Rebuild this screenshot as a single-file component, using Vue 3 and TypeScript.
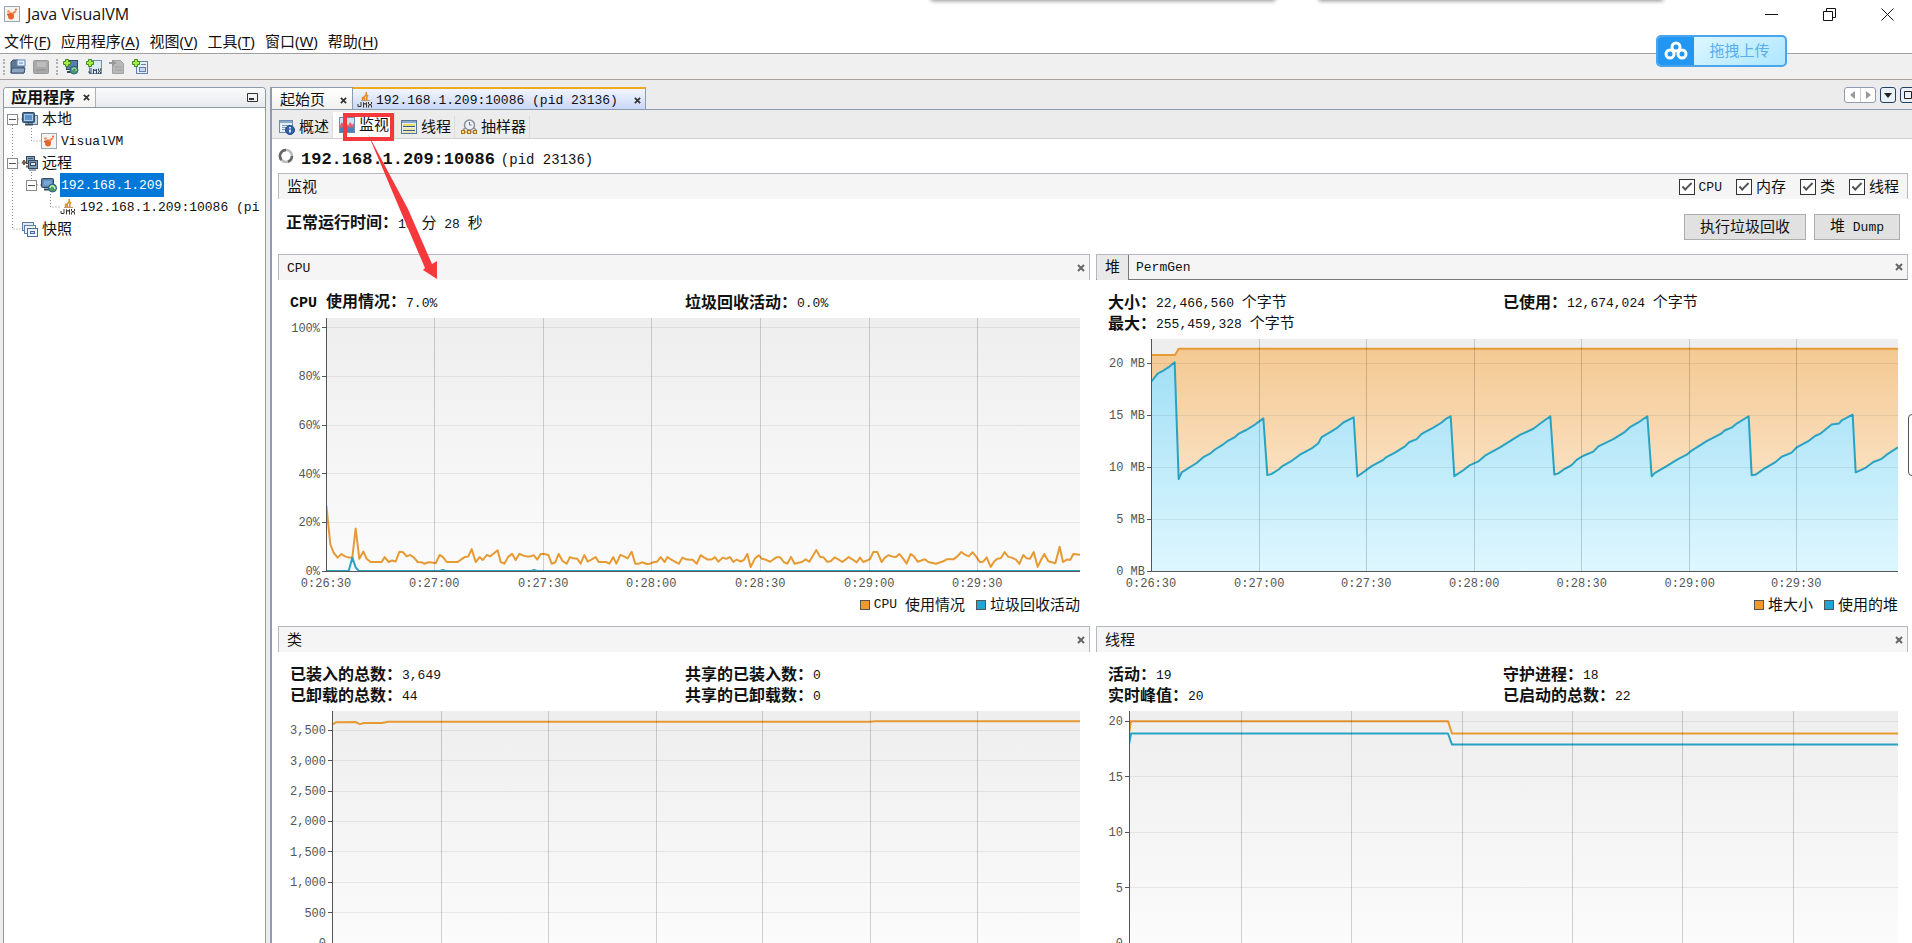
<script setup lang="ts">
import { h } from 'vue'

type Point = [number, number]
interface Tick { at: number; label: string }
interface Series { points: Point[]; kind: 'orange' | 'blue'; filled?: boolean }
interface Chart {
  id: string
  title: string
  tabs?: string[]
  info: [string, string][]
  width: number
  max: number
  xTicks: Tick[]
  yTicks: Tick[]
  series: Series[]
  legend: { kind: 'orange' | 'blue'; label: string }[]
}

/* Splits text into Latin and CJK runs so that each gets its own size. */
const Mix = (props: { text: string }) =>
  h('span', { class: 'mix' },
    (props.text.match(/[\x00-\x7f]+|[^\x00-\x7f]+/g) ?? []).map((run) =>
      h('span', { class: run.charCodeAt(0) < 128 ? 'latin' : 'han' }, run)))
Mix.props = ['text']

const track = (shift: number, source: string): Point[] =>
  source.trim().split(/\s+/).map((pair) => {
    const [x, v] = pair.split(',').map(Number)
    return [x + shift, v]
  })

const times = ['0:26:30', '0:27:00', '0:27:30', '0:28:00', '0:28:30', '0:29:00', '0:29:30']
const xTicks = (at: number[], labelled = true): Tick[] =>
  at.map((x, i) => ({ at: x, label: labelled ? times[i] : '' }))

const cpuLoad = [
  ...track(-168, `169,27 181,11 191,7.5 203,5.5 214,7 225,6 236,5.5 247,5.5 257,17.5 268,5 280,8 290,5 302,3.7 335,3.7
    344,5.7 356,3.7 366,4.3 377,3.9 388,7.9 399,7.7 410,6 421,6.6 432,5.5 443,3.7 454,3.6 465,3 475,3.6 486,3.5 497,3.2
    509,6.6 519,5.7 530,3.7 563,3.7 575,4.9 585,5.8 595,6 605,9 617,3.7 629,5.7 638,4.5 651,6.6 660,6 672,7.3 683,8.5
    692,3.7 703,3 714,5.7 726,7.1 737,4.5 748,7 759,6.4 770,6 781,6 791,6.5 802,4.7 812,7 823,7 835,6.6 845,3 856,3.6
    866,7 878,4 890,3 900,5.7 910,5.2 922,5 932,3 943,6.6 953,3.9 964,4.7 977,5.7 986,3.7 1008,3.7 1018,3 1030,5.7
    1039,3 1051,6.6 1062,6 1073,5.2 1085,7.9 1096,3 1107,3 1117,3.6 1130,2.9 1140,3 1150,3.6 1161,3.8 1172,5.7
    1184,3.7 1192,5.7 1204,4.7 1216,3.7 1227,3`),
  ...track(1062, `7,5.5 18,4.8 30,4.6 38,4.6 50,3 62,6.5 73,5.5 83,4.7 95,4.7 105,5.7 115,3.8 128,5.5 138,5 150,5.7 160,3.7
    170,4.7 182,3.9 192,4.6 202,7 212,1.6 224,5 236,6.5 246,5 258,4.6 270,3.8 290,5.7 300,5.7 312,3.6 322,3 333,5.8
    344,3 356,3.4 367,3.8 377,4.8 388,3.8 409,8.6 420,5.8 430,5.7 442,3.8 452,4 464,5.6 475,4.8 487,3.7 506,5.7
    518,4.7 530,3.5 540,5.5 550,3.7 570,4.9 580,7.8 592,7.8 605,3.7 614,5.4 625,6.5 636,6 648,5.8 658,7 670,5 680,3
    692,7 702,6 713,3.8 735,4.8 745,3.7 768,3 790,4 800,4.8 820,4.8 832,6 844,7.8 855,6.7 866,6 878,7.7 888,6 900,3.6
    910,3.9 920,5.6 932,1.7 943,4 952,5 963,5.3 974,7.8 985,5.8 997,5.4 1008,4.7 1018,2.9 1030,6.6 1040,5.2 1050,5
    1061,7.8 1073,1.7 1083,4.5 1093,7 1105,4 1126,3.2 1139,10 1149,3.7 1160,4.7 1171,4.6 1180,7 1200,6.7`),
]
const gcLoad = track(0, '0,0 68,0 79,5.5 89,1.5 98,0 342,0 350,0.4 360,0 615,0 624,0.4 634,0 2262,0')

const heapUsed = [
  ...track(-183, `183,18.2 203,19 220,19.3 237,19.65 254,20.1 266,8.85 275,9.5 297,9.94 320,10.4 340,10.96 360,11.3 375,11.7
    400,12.2 412,12.5 435,12.9 445,13.2 470,13.6 495,14.1 520,14.7 532,9.23 545,9.35 567,9.8 577,10.1 600,10.5 630,11.2
    665,11.8 685,12.3 695,12.9 727,13.5 740,13.75 760,14.3 791,14.8 802,9.1 845,10.1 880,10.7 888,10.95 915,11.4 945,12
    957,12.4 980,12.7 995,13.2 1030,13.8 1055,14.3 1070,14.7 1082,14.9 1093,9.13 1120,9.7 1140,10.2 1165,10.55 1185,11.1`),
  ...track(1047, `0,11.9 30,12.5 60,13.1 100,13.7 125,14.3 151,14.9 163,9.3 175,9.4 190,9.75 215,10.2 230,10.7 250,11.1
    280,11.5 295,12 340,12.7 375,13.4 390,13.85 415,14.3 442,14.9 455,9.13 465,9.45 500,10.1 530,10.7 560,11.2 575,11.6
    620,12.5 662,13.2 675,13.55 695,13.8 710,14.2 746,14.9 755,9.23 768,9.3 790,9.8 825,10.45 845,11 875,11.4 890,11.9
    925,12.5 945,13 960,13.2 995,14.1 1017,14.2 1025,14.5 1058,15.05 1067,9.5 1095,9.9 1120,10.5 1145,10.8 1160,11.2
    1194,11.9`),
]
const heapSize = track(0, '0,20.8 72,20.8 83,21.4 2241,21.4')

const charts: Chart[] = [
  {
    id: 'cpu', title: 'CPU',
    info: [['CPU 使用情况：', '7.0%'], ['垃圾回收活动：', '0.0%']],
    width: 2262, max: 104,
    xTicks: xTicks([0, 325, 652, 976, 1303, 1630, 1954]),
    yTicks: [0, 20, 40, 60, 80, 100].map((v) => ({ at: v, label: `${v}%` })),
    series: [{ points: cpuLoad, kind: 'orange' }, { points: gcLoad, kind: 'blue' }],
    legend: [{ kind: 'orange', label: 'CPU 使用情况' }, { kind: 'blue', label: '垃圾回收活动' }],
  },
  {
    id: 'heap', title: '', tabs: ['堆', 'PermGen'],
    info: [['大小：', '22,466,560 个字节'], ['已使用：', '12,674,024 个字节'], ['最大：', '255,459,328 个字节']],
    width: 2241, max: 22.34,
    xTicks: xTicks([0, 325, 646, 970, 1292, 1616, 1936]),
    yTicks: [0, 5, 10, 15, 20].map((v) => ({ at: v, label: `${v} MB` })),
    series: [{ points: heapSize, kind: 'orange', filled: true }, { points: heapUsed, kind: 'blue', filled: true }],
    legend: [{ kind: 'orange', label: '堆大小' }, { kind: 'blue', label: '使用的堆' }],
  },
  {
    id: 'classes', title: '类',
    info: [['已装入的总数：', '3,649'], ['共享的已装入数：', '0'], ['已卸载的总数：', '44'], ['共享的已卸载数：', '0']],
    width: 2244, max: 3816,
    xTicks: xTicks([0, 327, 649, 972, 1292, 1614, 1936], false),
    yTicks: [0, 500, 1000, 1500, 2000, 2500, 3000, 3500].map((v) => ({ at: v, label: v.toLocaleString('en-US') })),
    series: [{ points: track(0, '0,3590 12,3630 70,3635 84,3600 96,3618 150,3618 168,3640 1615,3640 1630,3649 2244,3649'), kind: 'orange' }],
    legend: [],
  },
  {
    id: 'threads', title: '线程',
    info: [['活动：', '19'], ['守护进程：', '18'], ['实时峰值：', '20'], ['已启动的总数：', '22']],
    width: 2307, max: 20.93,
    xTicks: xTicks([0, 336, 666, 999, 1329, 1661, 1992], false),
    yTicks: [0, 5, 10, 15, 20].map((v) => ({ at: v, label: `${v}` })),
    series: [
      { points: track(0, '0,18.9 6,20 957,20 969,18.9 2307,18.9'), kind: 'orange' },
      { points: track(0, '0,17.9 6,18.9 957,18.9 969,17.9 2307,17.9'), kind: 'blue' },
    ],
    legend: [],
  },
]

const line = (c: Chart, s: Series) => s.points.map(([x, v]) => `${x},${(c.max - v) / c.max * 1000}`).join(' ')
const area = (c: Chart, s: Series) => `0,1000 ${line(c, s)} ${c.width},1000`
const px = (c: Chart, t: Tick) => `${t.at / c.width * 100}%`
const py = (c: Chart, t: Tick) => `${(c.max - t.at) / c.max * 100}%`

const menus = [['文件', 'F'], ['应用程序', 'A'], ['视图', 'V'], ['工具', 'T'], ['窗口', 'W'], ['帮助', 'H']]
const tree = [
  { level: 1, icon: 'local', text: '本地', open: true },
  { level: 2, icon: 'vvm', text: 'VisualVM' },
  { level: 1, icon: 'remote', text: '远程', open: true },
  { level: 2, icon: 'host', text: '192.168.1.209', open: true, selected: true },
  { level: 3, icon: 'jmx', text: '192.168.1.209:10086 (pi' },
  { level: 1, icon: 'snap', text: '快照' },
]
const views = [
  { icon: 'overview', text: '概述' },
  { icon: 'monitor', text: '监视', on: true },
  { icon: 'threads', text: '线程' },
  { icon: 'sampler', text: '抽样器' },
]
const checks = ['CPU', '内存', '类', '线程']
</script>

<template>
  <svg class="defs" aria-hidden="true">
    <defs>
      <linearGradient id="plot-bg" x1="0" y1="0" x2="0" y2="1"><stop offset="0" stop-color="#eeeeee" /><stop offset="1" stop-color="#fbfbfb" /></linearGradient>
      <linearGradient id="fill-orange" gradientUnits="userSpaceOnUse" x1="0" y1="0" x2="0" y2="1000"><stop offset="0" stop-color="#f3c78f" /><stop offset="1" stop-color="#fff2e2" /></linearGradient>
      <linearGradient id="fill-blue" gradientUnits="userSpaceOnUse" x1="0" y1="0" x2="0" y2="1000"><stop offset="0" stop-color="#9bddf4" /><stop offset="1" stop-color="#def7ff" /></linearGradient>
    </defs>
    <symbol id="vvm" viewBox="0 0 16 16"><rect x=".5" y=".5" width="15" height="15" fill="#f7f3ee" stroke="#9aa7b5" /><ellipse cx="7" cy="10" rx="3" ry="3.500" fill="#e8642c" /><path d="M8 8l4-3" stroke="#ef8a50" stroke-width="2" /><circle cx="4.500" cy="5.500" r="1.300" fill="#ef8a50" /><circle cx="12" cy="3.500" r="1" fill="#e8642c" /><circle cx="4" cy="8.500" r="1" fill="#c9502a" /></symbol>
    <symbol id="local" viewBox="0 0 16 16"><rect x="6.500" y="4.500" width="9" height="9" fill="#c9d3dd" stroke="#61758a" /><rect x=".5" y="1.500" width="12" height="10" rx="1" fill="#3f6f9e" stroke="#334b63" /><rect x="2.500" y="3.500" width="8" height="6" fill="#5e94c8" stroke="#a9c8e4" /><path d="M3 13.500h8" stroke="#334b63" stroke-width="2" /></symbol>
    <symbol id="remote" viewBox="0 0 16 16"><rect x="4.500" y="1.500" width="8" height="7" fill="#8aa6c0" stroke="#33485e" /><rect x="6.500" y="5.500" width="9" height="8" fill="#7f9ab3" stroke="#33485e" /><rect x="8.500" y="7.500" width="5" height="3" fill="#dce8f2" stroke="#33485e" /><path d="M6 3.500h5M7 15h7" stroke="#3c5268" /><path d="M0 7.500h4M2 5v5M4 11.500h2" stroke="#7a5a48" stroke-width="2" /></symbol>
    <symbol id="host" viewBox="0 0 16 16"><rect x=".5" y="1.500" width="12" height="9" rx="1" fill="#5482b1" stroke="#34495f" /><rect x="2.500" y="3.500" width="8" height="5" fill="#79a7d3" /><path d="M3 12.500h7" stroke="#34495f" stroke-width="2" /><circle cx="11.500" cy="11" r="4" fill="#4b9a64" stroke="#2c5f87" /><path d="M9 11q1-3 3-2t2 3" stroke="#c4edb4" fill="none" stroke-width="1.500" /></symbol>
    <symbol id="jmx" viewBox="0 0 16 16"><path d="M9 0q1 3-1 4t0 4M11 3q-2 2-1 5M6 5q-1 1 0 3" stroke="#e08a2a" stroke-width="1.600" fill="none" /><path d="M4 8.500h9" stroke="#c49a60" /><path d="M1 12v2.500h3V10M6.500 15.500v-5l1.500 2 1.500-2v5M11.500 10v2l3 1.500v2M14.500 10v2l-3 1.500v2" stroke="#3b342e" fill="none" /></symbol>
    <symbol id="snap" viewBox="0 0 16 16"><rect x=".5" y="1.500" width="11" height="8" fill="#dfe8f3" stroke="#5d7da5" /><rect x="2.500" y="4.500" width="11" height="8" fill="#eef3f9" stroke="#5d7da5" /><rect x="5.500" y="7.500" width="10" height="8" fill="#eef3f9" stroke="#4a6c98" /><rect x="8.500" y="10.500" width="4" height="2" fill="#cfdcec" stroke="#4a6c98" /></symbol>
    <symbol id="open" viewBox="0 0 16 16"><path d="M1 14V3l2-2h5l1 2h5v11z" fill="#5f7795" stroke="#3c526f" /><rect x="7" y="1" width="8" height="6" fill="#e3edf8" stroke="#5f82b0" /><path d="M1 14l1-5h13l-1 5z" fill="#8aa4c2" stroke="#3c526f" /><path d="M9 4h4" stroke="#5f82b0" /></symbol>
    <symbol id="save" viewBox="0 0 16 16"><rect x=".5" y="1.500" width="15" height="13" rx="1" fill="#a9a9a9" stroke="#999" /><rect x="4" y="3" width="9" height="5" fill="#bdbdbd" /><path d="M3 11h10" stroke="#8f8f8f" /></symbol>
    <symbol id="plus" viewBox="0 0 16 16"><path d="M2.500.5h3v2h2v3h-2v2h-3v-2h-2v-3h2z" fill="#a6ea4a" stroke="#3d8a1d" /></symbol>
    <symbol id="add-host" viewBox="0 0 16 16"><rect x="3.500" y="1.500" width="11" height="9" fill="#5482b1" stroke="#34495f" /><path d="M4 13h7" stroke="#34495f" stroke-width="2" /><circle cx="11" cy="11" r="4" fill="#4b9a64" stroke="#2c5f87" /><path d="M9 11q1-3 3-2t1 3" stroke="#b9e6b2" fill="none" /><use href="#plus" width="16" height="16" /></symbol>
    <symbol id="add-jmx" viewBox="0 0 16 16"><rect x="3.500" y="1.500" width="12" height="13" fill="#dde8f3" stroke="#6b8fb5" /><path d="M3 12v2h2V9M7.500 15v-5l1.500 2 1.500-2v5M12.500 9.500v2l2 1.500v2M14.500 9.500v2l-2 1.500v2" stroke="#3a4a5a" fill="none" /><use href="#plus" width="16" height="16" /></symbol>
    <symbol id="add-off" viewBox="0 0 16 16"><path d="M3.500 1.500h8l3 3v10h-11z" fill="#b8b8b8" stroke="#a2a2a2" /><path d="M6 8h7M6 11h7" stroke="#a0a0a0" /><path d="M0 4h7M4 1v6" stroke="#989898" stroke-width="2" /></symbol>
    <symbol id="add-snap" viewBox="0 0 16 16"><rect x="4.500" y="2.500" width="11" height="12" fill="#e7eef7" stroke="#5f82b0" /><rect x="7.500" y="8.500" width="6" height="4" fill="#c8d8ec" stroke="#5f82b0" /><path d="M9 5.500h5" stroke="#5f82b0" /><use href="#plus" width="16" height="16" /></symbol>
    <symbol id="overview" viewBox="0 0 16 16"><rect x=".5" y="1.500" width="13" height="12" fill="#e6eef6" stroke="#6d8cad" /><rect x="1" y="2" width="12" height="2" fill="#88a9cc" /><path d="M3 6.500h8M3 8.500h4M3 10.500h3" stroke="#7f9bb8" /><circle cx="11" cy="11" r="4.500" fill="#2f62a8" stroke="#1e4781" /><path d="M11 8v1.500M11 10.500v3" stroke="#fff" stroke-width="1.600" /></symbol>
    <symbol id="monitor" viewBox="0 0 16 16"><rect x=".5" y=".5" width="15" height="15" fill="#cfe2f4" stroke="#6d8cad" /><path d="M1 12V8l2-3 2 4 2-5 2 5 2-4 2 3 2-2v6z" fill="#e2606a" /><path d="M1 15v-4l3-1 2 2 2-3 3 2 2-1 2 1v4z" fill="#4a80bd" /></symbol>
    <symbol id="threads" viewBox="0 0 16 16"><rect x=".5" y="1.500" width="15" height="13" fill="#e9eef4" stroke="#56779b" /><rect x="1" y="2" width="14" height="2" fill="#88a9cc" /><path d="M2 6h12" stroke="#e8dd6a" stroke-width="2" /><path d="M2 7.500h12M2 11.500h12" stroke="#3c5d86" /><path d="M2 10h12M2 13h12" stroke="#e8dd6a" /></symbol>
    <symbol id="sampler" viewBox="0 0 16 16"><circle cx="8.500" cy="6" r="5" fill="#edf1f5" stroke="#8c8f98" stroke-width="1.500" /><path d="M8.500 3v3h2" stroke="#66707c" fill="none" /><path d="M4 9l-2 2M13 9l2 2" stroke="#8c8f98" stroke-width="1.500" /><rect x=".5" y="11.500" width="3" height="3" fill="#f9e08a" stroke="#a8741c" /><rect x="6.500" y="11.500" width="3" height="3" fill="#f9e08a" stroke="#a8741c" /><rect x="12.500" y="11.500" width="3" height="3" fill="#f9e08a" stroke="#a8741c" /><path d="M4 13h2M10 13h2" stroke="#a8741c" /></symbol>
    <symbol id="x" viewBox="0 0 8 8"><path d="M1 1l6 6M7 1L1 7" stroke="currentColor" stroke-width="2" /></symbol>
  </svg>

  <div class="window">
    <header class="titlebar">
      <svg class="icon"><use href="#vvm" /></svg>
      <h1>Java VisualVM</h1>
      <div class="winbtns">
        <button type="button" aria-label="最小化"><svg viewBox="0 0 13 13"><path d="M0 6.500h13" /></svg></button>
        <button type="button" aria-label="还原"><svg viewBox="0 0 13 13"><path d="M.5 3.500h9v9h-9zM3.500 3.500v-3h9v9h-3" /></svg></button>
        <button type="button" aria-label="关闭"><svg viewBox="0 0 13 13"><path d="M.5.5l12 12M12.500.5l-12 12" /></svg></button>
      </div>
    </header>
    <nav class="menubar">
      <button v-for="m in menus" :key="m[1]" type="button">{{ m[0] }}(<u>{{ m[1] }}</u>)</button>
    </nav>
    <div class="toolbar">
      <span class="grip"></span>
      <button type="button" aria-label="打开"><svg class="icon"><use href="#open" /></svg></button>
      <button type="button" aria-label="保存" disabled><svg class="icon"><use href="#save" /></svg></button>
      <span class="grip"></span>
      <button type="button" aria-label="添加远程主机"><svg class="icon"><use href="#add-host" /></svg></button>
      <button type="button" aria-label="添加 JMX 连接"><svg class="icon"><use href="#add-jmx" /></svg></button>
      <button type="button" aria-label="添加核心转储" disabled><svg class="icon"><use href="#add-off" /></svg></button>
      <button type="button" aria-label="添加快照"><svg class="icon"><use href="#add-snap" /></svg></button>
    </div>

    <div class="workspace">
      <aside class="sidebar">
        <div class="side-head">
          <div class="side-tab"><b>应用程序</b><button type="button" aria-label="关闭应用程序"><svg class="cross"><use href="#x" /></svg></button></div>
          <button type="button" class="minimise" aria-label="最小化窗口组"><svg viewBox="0 0 11 9"><path d="M.5.5h10v8H.5z" fill="none" stroke="#333" /><path d="M2 6h5" stroke="#333" stroke-width="2" /></svg></button>
        </div>
        <div class="tree">
          <svg class="guides" aria-hidden="true"><path d="M8.500 11v110h10M8.500 55h10M14 11h6M27.500 20v13h10M27.500 64v14M33 77h6M46.500 86v13h10" /></svg>
          <div v-for="n in tree" :key="n.text" class="node" :class="'level-' + n.level">
            <button v-if="n.open" type="button" class="toggle" :aria-label="'折叠 ' + n.text"></button>
            <span v-else class="no-toggle"></span>
            <svg class="icon"><use :href="'#' + n.icon" /></svg>
            <span class="label" :class="{ selected: n.selected }"><Mix :text="n.text" /></span>
          </div>
        </div>
      </aside>

      <main class="editor">
        <div class="doc-tabs">
          <div class="doc-tab"><span>起始页</span><button type="button" aria-label="关闭起始页"><svg class="cross"><use href="#x" /></svg></button></div>
          <div class="doc-tab active"><svg class="icon"><use href="#jmx" /></svg><Mix text="192.168.1.209:10086 (pid 23136)" /><button type="button" aria-label="关闭标签"><svg class="cross"><use href="#x" /></svg></button></div>
          <div class="doc-nav">
            <span class="pair"><button type="button" aria-label="向左"><svg viewBox="0 0 5 8"><path d="M5 0v8L0 4z" fill="#999" /></svg></button><button type="button" aria-label="向右"><svg viewBox="0 0 5 8"><path d="M0 0v8l5-4z" fill="#999" /></svg></button></span>
            <button type="button" class="box" aria-label="文档列表"><svg viewBox="0 0 8 5"><path d="M0 0h8L4 5z" fill="#222" /></svg></button>
            <button type="button" class="box" aria-label="最大化"><svg viewBox="0 0 8 8"><path d="M.5.5h7v7h-7z" fill="none" stroke="#222" /></svg></button>
          </div>
        </div>
        <div class="view-tabs">
          <button v-for="v in views" :key="v.text" type="button" :class="{ on: v.on }"><svg class="icon"><use :href="'#' + v.icon" /></svg>{{ v.text }}</button>
        </div>

        <div class="page">
          <h2 class="heading">
            <svg class="spinner" viewBox="0 0 16 16"><circle cx="8" cy="8" r="6" fill="none" stroke="#bbb" stroke-width="2.500" /><path d="M8 2a6 6 0 0 0-4.500 10M10 13.700A6 6 0 0 0 14 8" fill="none" stroke="#666" stroke-width="2.500" /></svg>
            <b>192.168.1.209:10086</b><span>(pid 23136)</span>
          </h2>
          <div class="bar">
            <span>监视</span>
            <div class="checks">
              <label v-for="c in checks" :key="c"><input type="checkbox" checked /><Mix :text="c" /></label>
            </div>
          </div>
          <div class="uptime">
            <p><b>正常运行时间：</b><Mix text="18 分 28 秒" /></p>
            <div class="actions">
              <button type="button">执行垃圾回收</button>
              <button type="button"><Mix text="堆 Dump" /></button>
            </div>
          </div>

          <div class="panels">
            <section v-for="c in charts" :key="c.id" class="panel" :class="c.id">
              <div class="bar" :class="{ tabbed: c.tabs }">
                <template v-if="c.tabs"><button v-for="(t, i) in c.tabs" :key="t" type="button" class="heap-tab" :class="{ on: i === 0 }"><Mix :text="t" /></button></template>
                <Mix v-else :text="c.title" />
                <button type="button" class="close" aria-label="关闭面板"><svg><use href="#x" /></svg></button>
              </div>
              <dl class="info">
                <div v-for="row in c.info" :key="row[0]"><dt><Mix :text="row[0]" /></dt><dd><Mix :text="row[1]" /></dd></div>
              </dl>
              <div class="plot">
                <svg class="chart" role="img" :aria-label="c.id">
                  <rect width="100%" height="100%" fill="url(#plot-bg)" />
                  <svg width="100%" height="100%" :viewBox="`0 0 ${c.width} 1000`" preserveAspectRatio="none">
                    <template v-for="s in c.series" :key="s.kind">
                      <polygon v-if="s.filled" :points="area(c, s)" :fill="`url(#fill-${s.kind})`" />
                      <polyline class="trace" :class="s.kind" :points="line(c, s)" />
                    </template>
                  </svg>
                  <g v-for="t in c.yTicks" :key="'y' + t.at">
                    <line class="grid faint" x1="0" x2="100%" :y1="py(c, t)" :y2="py(c, t)" />
                    <line class="axis" x1="-4" x2="0" :y1="py(c, t)" :y2="py(c, t)" />
                    <text x="-6" dy="4" :y="py(c, t)" text-anchor="end">{{ t.label }}</text>
                  </g>
                  <g v-for="t in c.xTicks" :key="'x' + t.at">
                    <line class="grid" y1="0" y2="100%" :x1="px(c, t)" :x2="px(c, t)" />
                    <text v-if="t.label" y="100%" dy="16" :x="px(c, t)" text-anchor="middle">{{ t.label }}</text>
                  </g>
                  <line class="axis" x1="0" x2="0" y1="0" y2="100%" />
                  <line class="axis" x1="0" x2="100%" y1="100%" y2="100%" />
                </svg>
              </div>
              <div v-if="c.legend.length" class="legend">
                <span v-for="l in c.legend" :key="l.label"><i :class="l.kind"></i><Mix :text="l.label" /></span>
              </div>
            </section>
          </div>
        </div>
      </main>
    </div>

    <svg class="marker" viewBox="0 0 100 170" aria-hidden="true">
      <rect x="5" y="4" width="47" height="24" fill="none" stroke="#f5383b" stroke-width="4" />
      <path d="M28 23l33 78 24 56-2 2 14 9V150l-5 3-24-55z" fill="#f5383b" />
    </svg>
    <button type="button" class="upload">
      <svg viewBox="0 0 24 20"><g fill="none" stroke="#fff" stroke-width="3"><circle cx="12" cy="6" r="4" /><circle cx="6" cy="13" r="4" /><circle cx="18" cy="13" r="4" /></g></svg>
      <span>拖拽上传</span>
    </button>
    <div class="shade one"></div>
    <div class="shade two"></div>
    <div class="edge-handle"></div>
  </div>
</template>

<style>
html, body { margin: 0; height: 100%; overflow: hidden; }
.mix { white-space: pre; }
.mix .latin { font-family: "Liberation Mono", monospace; font-size: 13px; }
dt .mix .latin { font-size: 15px; }
</style>

<style scoped>
.window {
  position: relative; display: flex; flex-direction: column; height: 100vh; overflow: hidden;
  background: #eee; color: #111; font: 15px/20px "Liberation Sans", "Noto Sans CJK SC", sans-serif;
}
.defs { position: absolute; width: 0; height: 0; }
button { margin: 0; padding: 0; border: 0; background: none; color: inherit; font: inherit; }
h1, h2, p, dl, dd { margin: 0; font-weight: normal; }
svg { display: block; flex: none; }
.icon { width: 16px; height: 16px; }
.cross { width: 7px; height: 7px; color: #333; }

.titlebar { display: flex; align-items: center; height: 28px; padding-left: 4px; background: #fff; }
.titlebar h1 { margin-left: 7px; font: 16px/20px "Open Sans", sans-serif; }
.winbtns { display: flex; gap: 45px; margin-left: auto; padding-right: 18px; }
.winbtns svg { width: 13px; height: 13px; fill: none; stroke: #111; }
.menubar { display: flex; gap: 10px; height: 25px; padding: 0 4px; align-items: center; background: #fff; border-bottom: 1px solid #a0a0a0; font-family: "Noto Sans", "Noto Sans CJK SC", sans-serif; }
.menubar button { line-height: 20px; white-space: nowrap; }
.menubar u { text-underline-offset: 2px; }
.toolbar { display: flex; align-items: center; height: 25px; padding: 0 3px; background: #f0f0f0; border-bottom: 1px solid #a8a29e; }
.toolbar button { margin-right: 7px; }
.grip { height: 16px; margin-right: 5px; border-left: 2px dotted #b0b0b0; }

.workspace { display: flex; flex: 1; min-height: 0; padding: 7px 0 0 3px; background: #ececec; }
.sidebar { display: flex; flex-direction: column; width: 261px; border: 1px solid #8e9bab; border-bottom: 0; border-radius: 4px 4px 0 0; background: #fff; overflow: hidden; }
.side-head { display: flex; align-items: stretch; height: 19px; border-bottom: 1px solid #8e9bab; background: linear-gradient(#fafafa, #e8ebee); }
.side-tab { display: flex; align-items: center; gap: 8px; padding: 0 5px 0 7px; border-right: 1px solid #a9b3be; background: linear-gradient(#fff, #f3f3f0); font-size: 16px; }
.minimise { margin: 0 7px 0 auto; }
.minimise svg { width: 11px; height: 9px; }
.tree { position: relative; padding-left: 3px; overflow: hidden; }
.guides { position: absolute; left: 0; top: 0; width: 70px; height: 140px; fill: none; stroke: #888; stroke-dasharray: 1 2; }
.node { position: relative; display: flex; align-items: center; height: 22px; white-space: nowrap; }
.level-2 { padding-left: 19px; }
.level-3 { padding-left: 38px; }
.toggle, .no-toggle { flex: none; width: 11px; height: 11px; margin-right: 4px; box-sizing: border-box; }
.toggle { border: 1px solid #8a8a8a; background: linear-gradient(#555, #555) center / 7px 1px no-repeat #fff; }
.label { margin-left: 3px; padding: 0 2px 0 1px; line-height: 22px; }
.label.selected { background: #0078d7; color: #fff; }

.editor { display: flex; flex: 1; flex-direction: column; min-width: 0; margin-left: 4px; border-left: 2px solid #8e9bab; background: #ececec; }
.doc-tabs { display: flex; align-items: stretch; height: 23px; box-sizing: border-box; border-bottom: 1px solid #8e9bab; }
.doc-tab { display: flex; align-items: center; padding: 3px 5px 0 8px; border: 1px solid #8e9bab; border-width: 1px 1px 0 0; background: linear-gradient(#fff, #f1f1ee); white-space: nowrap; }
.doc-tab button { margin-left: 15px; }
.doc-tab.active { gap: 3px; padding: 2px 4px 0; border-top: 2px solid #f0a91e; background: linear-gradient(#f2f5fd, #c9d8f8); }
.doc-tab.active button { margin-left: 13px; }
.doc-nav { display: flex; gap: 4px; margin: 0 -4px 6px auto; }
.pair { display: flex; border: 1px solid #8e9bb0; border-radius: 3px; background: #fff; }
.pair button { display: grid; place-items: center; width: 15px; }
.pair svg { width: 5px; height: 8px; }
.pair button + button { border-left: 1px solid #ccc; }
.box { display: grid; place-items: center; width: 16px; box-sizing: border-box; border: 1px solid #24405c; border-radius: 3px; background: #eaf1f8; }
.box svg { width: 8px; }
.view-tabs { display: flex; align-items: flex-end; height: 27px; margin-top: 2px; padding-left: 1px; border-bottom: 1px solid #d0d0d0; box-sizing: border-box; }
.view-tabs button { display: flex; align-items: center; gap: 4px; height: 22px; padding: 0 3px 0 6px; border-right: 1px solid #dcdcdc; }
.view-tabs button.on { height: 26px; padding: 0 5px 0 6px; background: #fff; }

.page { flex: 1; min-height: 0; padding: 0 4px 0 6px; overflow: hidden; background: #fff; }
.heading { display: flex; align-items: center; height: 34px; font: 14px/34px "Liberation Mono", monospace; white-space: nowrap; }
.heading b { margin: 0 6px 0 7px; padding-top: 8px; font-size: 17px; }
.heading span { padding-top: 8px; }
.spinner { width: 16px; height: 16px; }
.bar { display: flex; align-items: center; height: 26px; box-sizing: border-box; padding: 0 8px; border: 1px solid #b5b9bd; border-bottom: 0; background: #f5f5f5; }
.checks { display: flex; gap: 14px; margin-left: auto; }
.checks label { display: flex; align-items: center; gap: 4px; }
.checks input { appearance: none; width: 16px; height: 16px; margin: 0; border: 1px solid #333; background: #fff; display: grid; place-items: center; }
.checks input:checked::before { content: ""; width: 10px; height: 5px; box-sizing: border-box; border: 1px solid #555; border-width: 0 0 2px 2px; transform: translateY(-1px) rotate(-45deg); }
.uptime { display: flex; align-items: center; justify-content: space-between; height: 55px; padding: 0 8px; }
.uptime p { padding-bottom: 6px; }
.uptime b { font-size: 16px; }
.actions { display: flex; gap: 8px; }
.actions button { height: 26px; padding: 0 15px; border: 1px solid #adadad; background: #e1e1e1; }

.panels { display: grid; grid-template-columns: 1fr 1fr; column-gap: 6px; row-gap: 11px; }
.panel { min-width: 0; }
.bar .close { margin: 0 -4px 0 auto; color: #666; }
.bar .close svg { width: 8px; height: 8px; }
.bar.tabbed { padding-left: 0; border-bottom: 1px solid #77797c; }
.heap-tab { height: 25px; padding: 0 7px; }
.heap-tab.on { padding: 0 8px; border-right: 1px solid #77797c; background: #e9e9e9; }
.info { display: grid; grid-template-columns: 1fr 1fr; padding: 12px 10px 5px 12px; }
.info div { display: flex; height: 21px; align-items: center; white-space: nowrap; }
.info dt { font-weight: bold; font-size: 16px; }
.plot { margin-right: 10px; }
.cpu .plot { margin-left: 48px; }
.heap .plot { margin-left: 55px; }
.classes .plot { margin-left: 54px; }
.threads .plot { margin-left: 33px; }
.chart { width: 100%; height: 232px; overflow: visible; }
.cpu .chart { height: 253px; }
.chart text { fill: #555; font: 12px "Liberation Mono", monospace; }
.trace { fill: none; stroke-width: 2; vector-effect: non-scaling-stroke; stroke-linejoin: round; }
.trace.orange { stroke: #e69a34; }
.trace.blue { stroke: #2aa2c4; }
.grid { stroke: #000; stroke-opacity: .17; shape-rendering: crispEdges; }
.grid.faint { stroke-opacity: .07; }
.axis { stroke: #555; shape-rendering: crispEdges; }
.legend { display: flex; justify-content: flex-end; gap: 11px; height: 20px; margin: 24px 10px 0 0; align-items: center; }
.legend span { display: flex; align-items: center; }
.legend i { width: 8px; height: 8px; margin-right: 4px; border: 1px solid #555; }
.legend i.orange { background: #ef9a2b; }
.legend i.blue { background: #24a3d0; }

.marker { position: absolute; left: 340px; top: 111px; width: 100px; height: 170px; pointer-events: none; }
.upload { position: absolute; right: 125px; top: 35px; display: flex; align-items: center; width: 131px; height: 32px; box-sizing: border-box; border: 2px solid #4aa5ec; border-radius: 5px; background: linear-gradient(150deg, #e8fbff, #aee6ff); color: #58aef0; overflow: hidden; }
.upload svg { width: 24px; height: 32px; padding: 0 6px; background: #2196f3; }
.upload span { flex: 1; text-align: center; }
.shade { position: absolute; top: -6px; width: 344px; height: 6px; box-shadow: 0 1px 4px rgba(0, 0, 0, .45); }
.shade.one { left: 931px; }
.shade.two { left: 1319px; }
.edge-handle { position: absolute; right: -6px; top: 414px; width: 8px; height: 60px; border: 1px solid #555; border-radius: 4px; background: #fff; }
</style>
